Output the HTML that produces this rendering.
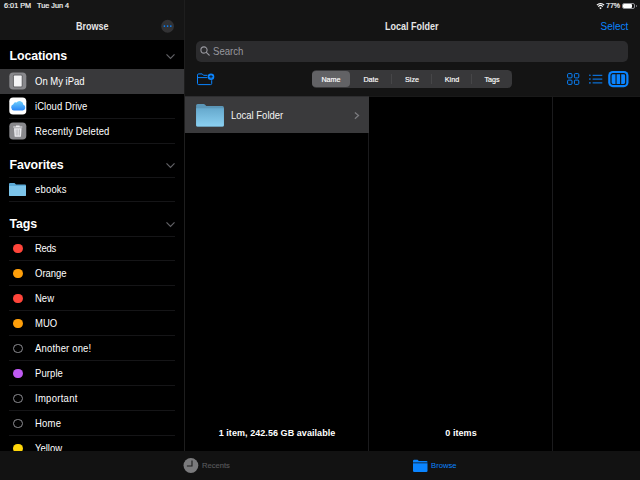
<!DOCTYPE html>
<html><head><meta charset="utf-8">
<style>
*{box-sizing:border-box;margin:0;padding:0}
html,body{width:640px;height:480px;overflow:hidden;background:#000;font-family:"Liberation Sans",sans-serif;color:#fff}
.abs{position:absolute}
#side{position:absolute;left:0;top:0;width:184px;height:480px;background:#000;overflow:hidden}
#sidehead{position:absolute;left:0;top:0;width:184px;height:39.5px;background:#151515}
#main{position:absolute;left:185px;top:0;width:455px;height:480px;background:#000}
#mainhead{position:absolute;left:0;top:0;width:455px;height:97px;background:#141414;border-bottom:1px solid #191919;height:97px}
#vdiv{position:absolute;left:184px;top:0;width:1px;height:451px;background:#1e1e1e}
.status{position:absolute;top:1px;font-size:7.3px;color:#f4f4f4;white-space:nowrap;-webkit-text-stroke:0.2px #f4f4f4;transform:translateY(0.4px) rotate(0.01deg);transform-origin:0 50%}
.t{position:absolute;white-space:nowrap}
.sec{position:absolute;left:9.5px;font-size:12.4px;font-weight:bold;letter-spacing:-0.12px}
.row{position:absolute;left:0;width:184px;height:25px}
.row .lbl{position:absolute;left:35px;top:6px;font-size:10.1px;white-space:nowrap;transform:translateY(0.8px) scaleX(0.94) rotate(0.01deg);transform-origin:0 50%}
.row .sep{position:absolute;left:9px;right:9px;bottom:0;height:1px;background:#151517}
.dot{position:absolute;left:13px;top:7.5px;width:9.5px;height:9.5px;border-radius:50%}
.ring{position:absolute;left:13px;top:7.5px;width:9.5px;height:9.5px;border-radius:50%;border:1px solid #8e8e93}
.chev{position:absolute;left:166px}
#tab{position:absolute;left:0;top:451px;width:640px;height:29px;background:#121212}
.seg{position:absolute;top:1px;height:18px;font-size:7.2px;text-align:center;line-height:18px;color:#fff;-webkit-text-stroke:0.15px #fff}
</style></head><body>
<div id="side">
  <div id="sidehead"></div>
  <div class="status" style="left:4px">6:01 PM</div>
  <div class="status" style="left:37px">Tue Jun 4</div>
  <div class="t" style="left:76px;top:20px;font-size:10px;font-weight:bold;color:#e6e6e6;transform:translateY(1px) scaleX(0.9) rotate(0.01deg);transform-origin:0 50%">Browse</div>
  <svg class="abs" style="left:160px;top:19px" width="15" height="15" viewBox="0 0 15 15"><circle cx="7.6" cy="7.25" r="6.4" fill="#323234"/><g fill="#0a84ff"><circle cx="4.4" cy="7.1" r="0.85"/><circle cx="7.6" cy="7.1" r="0.85"/><circle cx="10.8" cy="7.1" r="0.85"/></g></svg>

  <div class="sec" style="top:49px">Locations</div>
  <svg class="chev" style="top:53px" width="9" height="7" viewBox="0 0 9 7"><path d="M0.5 1.3 L4.5 5.4 L8.5 1.3" fill="none" stroke="#626266" stroke-width="1.15"/></svg>

  <div class="row" style="top:69px;background:#39393b">
    <svg class="abs" style="left:9px;top:3px" width="18" height="18" viewBox="0 0 18 18"><rect x="0.3" y="0.5" width="17" height="17" rx="3.8" fill="#88888c"/><rect x="3.9" y="2.6" width="9.8" height="12.8" rx="1.6" fill="#636366"/><rect x="4.9" y="3.6" width="7.8" height="10.8" rx="0.6" fill="#f4f4f6"/></svg>
    <div class="lbl">On My iPad</div>
  </div>
  <div class="row" style="top:94px">
    <svg class="abs" style="left:9px;top:3px" width="18" height="18" viewBox="0 0 18 18"><defs><linearGradient id="cg" x1="0" y1="0" x2="0" y2="1"><stop offset="0" stop-color="#6fd0fc"/><stop offset="1" stop-color="#2a86f6"/></linearGradient></defs><rect x="0.3" y="0.5" width="17" height="17" rx="3.8" fill="#fff"/><path transform="translate(0 13.4) scale(1 1.09) translate(0 -13.4)" d="M4.9 13.4 A2.9 2.9 0 0 1 4.3 7.7 A2.6 2.6 0 0 1 7.5 6.2 A3.9 3.9 0 0 1 14.4 8.3 A2.6 2.6 0 0 1 13.7 13.4 Z" fill="url(#cg)"/></svg>
    <div class="lbl" style="letter-spacing:0.07px">iCloud Drive</div>
    <div class="sep"></div>
  </div>
  <div class="row" style="top:119px">
    <svg class="abs" style="left:9px;top:3px" width="18" height="18" viewBox="0 0 18 18"><rect x="0.3" y="0.5" width="17" height="17" rx="3.8" fill="#88888c"/><path d="M4.3 5.4 H13.3 V4.4 H10.6 V3.5 H7 V4.4 H4.3 Z" fill="#ececf0"/><path d="M5 6.2 H12.6 L12 14.2 Q11.95 14.8 11.3 14.8 H6.3 Q5.65 14.8 5.6 14.2 Z" fill="#ececf0"/><path d="M7.1 7.4 L7.3 13.6 M8.8 7.4 V13.6 M10.5 7.4 L10.3 13.6" stroke="#a4a4a8" stroke-width="0.7"/></svg>
    <div class="lbl" style="letter-spacing:0.15px">Recently Deleted</div>
    <div class="sep"></div>
  </div>

  <div class="sec" style="top:158px">Favorites</div>
  <svg class="chev" style="top:162px" width="9" height="7" viewBox="0 0 9 7"><path d="M0.5 1.3 L4.5 5.4 L8.5 1.3" fill="none" stroke="#626266" stroke-width="1.15"/></svg>
  <div class="abs" style="left:9px;right:9px;top:177px;height:1px;background:#151517"></div>
  <div class="row" style="top:177px">
    <svg class="abs" style="left:9px;top:6px" width="17" height="13" viewBox="0 0 17 13"><path d="M0 1 Q0 0 1 0 H5.5 L7 1.4 H16 Q17 1.4 17 2.4 V12 Q17 13 16 13 H1 Q0 13 0 12 Z" fill="#5aa9d6"/><path d="M0 3 H17 V12 Q17 13 16 13 H1 Q0 13 0 12 Z" fill="#7cc4ea"/></svg>
    <div class="lbl" style="letter-spacing:0.2px">ebooks</div>
    <div class="sep"></div>
  </div>

  <div class="sec" style="top:217px">Tags</div>
  <svg class="chev" style="top:221px" width="9" height="7" viewBox="0 0 9 7"><path d="M0.5 1.3 L4.5 5.4 L8.5 1.3" fill="none" stroke="#626266" stroke-width="1.15"/></svg>
  <div class="abs" style="left:9px;right:9px;top:236px;height:1px;background:#151517"></div>

  <div class="row" style="top:236px"><div class="dot" style="background:#ff453a"></div><div class="lbl" style="letter-spacing:-0.3px">Reds</div><div class="sep"></div></div>
  <div class="row" style="top:261px"><div class="dot" style="background:#ff9f0a"></div><div class="lbl">Orange</div><div class="sep"></div></div>
  <div class="row" style="top:286px"><div class="dot" style="background:#ff453a"></div><div class="lbl">New</div><div class="sep"></div></div>
  <div class="row" style="top:311px"><div class="dot" style="background:#ff9f0a"></div><div class="lbl">MUO</div><div class="sep"></div></div>
  <div class="row" style="top:336px"><div class="ring"></div><div class="lbl" style="letter-spacing:0.18px">Another one!</div><div class="sep"></div></div>
  <div class="row" style="top:361px"><div class="dot" style="background:#bf5af2"></div><div class="lbl" style="letter-spacing:0.1px">Purple</div><div class="sep"></div></div>
  <div class="row" style="top:386px"><div class="ring"></div><div class="lbl" style="letter-spacing:0.3px">Important</div><div class="sep"></div></div>
  <div class="row" style="top:411px"><div class="ring"></div><div class="lbl" style="letter-spacing:0.25px">Home</div><div class="sep"></div></div>
  <div class="row" style="top:436px"><div class="dot" style="background:#ffd60a"></div><div class="lbl">Yellow</div></div>
</div>
<div id="vdiv"></div>

<div id="main">
  <div id="mainhead"></div>
  <div class="t" style="left:199.5px;top:20px;font-size:10px;font-weight:bold;color:#e6e6e6;transform:translateY(1px) scaleX(0.9) rotate(0.01deg);transform-origin:0 50%">Local Folder</div>
  <div class="t" style="left:415.5px;top:21px;font-size:10px;color:#0a84ff">Select</div>
  <!-- status right -->
  <svg class="abs" style="left:410.5px;top:2px" width="9" height="8" viewBox="0 0 9 8"><g fill="none" stroke="#fff" stroke-linecap="butt"><path d="M0.9 3.1 A5.1 5.1 0 0 1 8.1 3.1" stroke-width="1.15"/><path d="M2.25 4.55 A3.2 3.2 0 0 1 6.75 4.55" stroke-width="1.1"/></g><path d="M4.5 7.2 L3.3 5.9 A1.7 1.7 0 0 1 5.7 5.9 Z" fill="#fff"/></svg>
  <div class="status" style="left:421px;font-size:7px;top:2px">77%</div>
  <div class="abs" style="left:436.8px;top:3px;width:13.6px;height:6.2px;border:0.8px solid #8e8e93;border-radius:2px"></div>
  <div class="abs" style="left:438px;top:4.2px;width:9.2px;height:3.8px;border-radius:1px;background:#fff"></div>
  <div class="abs" style="left:450.8px;top:5px;width:1px;height:2.2px;background:#8e8e93;border-radius:0 1px 1px 0"></div>

  <!-- search -->
  <div class="abs" style="left:11px;top:41px;width:432px;height:20.5px;border-radius:5px;background:#2c2c2e"></div>
  <svg class="abs" style="left:15px;top:46px" width="10" height="10" viewBox="0 0 10 10"><circle cx="4" cy="4" r="3.1" fill="none" stroke="#98989f" stroke-width="1.1"/><path d="M6.3 6.3 L9.2 9.2" stroke="#98989f" stroke-width="1.2" stroke-linecap="round"/></svg>
  <div class="t" style="left:28px;top:46px;font-size:10.1px;color:#98989f;transform:translateY(0px) scaleX(0.95) rotate(0.01deg);transform-origin:0 50%">Search</div>

  <!-- new folder icon -->
  <svg class="abs" style="left:12px;top:72px" width="18" height="14" viewBox="0 0 18 14"><path d="M10.4 3.3 H6.5 L5.2 1.9 H1.7 Q0.5 1.9 0.5 3.1 V11.5 Q0.5 12.6 1.6 12.6 H13.6 Q14.7 12.6 14.7 11.5 V8.2 M0.5 5.6 H10.4" fill="none" stroke="#0a84ff" stroke-width="1"/><circle cx="14" cy="4.7" r="3.3" fill="#0a84ff"/><path d="M14 3 V6.4 M12.3 4.7 H15.7" stroke="#141414" stroke-width="0.9"/></svg>

  <!-- segmented -->
  <div class="abs" style="left:127px;top:70px;width:200px;height:18px;border-radius:4.5px;background:#38383a">
    <div class="abs" style="left:0.2px;top:0.8px;width:37.8px;height:16.4px;border-radius:4px;background:#626265"></div>
    <div class="seg" style="left:0;width:38px">Name</div>
    <div class="seg" style="left:38px;width:42px">Date</div>
    <div class="seg" style="left:80px;width:40px">Size</div>
    <div class="seg" style="left:120px;width:40px">Kind</div>
    <div class="seg" style="left:160px;width:40px">Tags</div>
    <div class="abs" style="left:79px;top:4px;width:1px;height:10px;background:#464648"></div>
    <div class="abs" style="left:119px;top:4px;width:1px;height:10px;background:#464648"></div>
    <div class="abs" style="left:159px;top:4px;width:1px;height:10px;background:#464648"></div>
  </div>

  <!-- view icons -->
  <svg class="abs" style="left:381.8px;top:73px" width="13" height="13" viewBox="0 0 13 13"><g fill="none" stroke="#0a84ff" stroke-width="1"><rect x="0.6" y="0.6" width="4.4" height="4.3" rx="1"/><rect x="7.4" y="0.6" width="4.4" height="4.3" rx="1"/><rect x="0.6" y="7.1" width="4.4" height="4.3" rx="1"/><rect x="7.4" y="7.1" width="4.4" height="4.3" rx="1"/></g></svg>
  <svg class="abs" style="left:404px;top:74px" width="14" height="11" viewBox="0 0 14 11"><g stroke="#0a84ff" stroke-width="1"><path d="M3.6 1.3 H13.3 M3.6 5.1 H13.3 M3.6 8.9 H13.3"/></g><g fill="#0a84ff"><circle cx="0.9" cy="1.3" r="0.8"/><circle cx="0.9" cy="5.1" r="0.8"/><circle cx="0.9" cy="8.9" r="0.8"/></g></svg>
  <svg class="abs" style="left:423px;top:70px" width="21" height="18" viewBox="0 0 21 18"><rect x="0.2" y="1" width="20.3" height="16.2" rx="4.6" fill="#0a84ff"/><rect x="3" y="3.7" width="14.7" height="10.8" rx="2" fill="none" stroke="#141414" stroke-width="1.2"/><path d="M8.05 3.7 V14.5 M12.65 3.7 V14.5" stroke="#141414" stroke-width="1.1"/></svg>

  <!-- column 1 row -->
  <div class="abs" style="left:0;top:96px;width:184px;height:1px;background:#2d2d2f;z-index:2"></div><div class="abs" style="left:0;top:97px;width:184px;height:36px;background:#3a3a3c;z-index:2"></div>
  <svg class="abs" style="left:11px;top:104px;z-index:3" width="28" height="23" viewBox="0 0 28 23"><defs><linearGradient id="fg" x1="0" y1="0" x2="0" y2="1"><stop offset="0" stop-color="#66a9cd"/><stop offset="1" stop-color="#8bd0f1"/></linearGradient></defs><path d="M0.1 1.5 Q0.1 0 1.6 0 H7.6 Q8.5 0 9.1 0.7 L10.3 2 H26.4 Q27.9 2 27.9 3.5 V21 Q27.9 22.5 26.4 22.5 H1.6 Q0.1 22.5 0.1 21 Z" fill="#5b96b7"/><path d="M0.1 4.2 H27.9 V21 Q27.9 22.5 26.4 22.5 H1.6 Q0.1 22.5 0.1 21 Z" fill="url(#fg)"/></svg>
  <div class="t" style="left:46px;top:110px;font-size:10.1px;color:#f4f4f4;transform:translateY(0px) scaleX(0.94) rotate(0.01deg);transform-origin:0 50%;z-index:3">Local Folder</div>
  <svg class="abs" style="left:169px;top:110px;z-index:3" width="6" height="10" viewBox="0 0 6 10"><path d="M0.9 2.5 L4.5 5.6 L0.9 8.7" fill="none" stroke="#7a7a7e" stroke-width="1.3"/></svg>

  <div class="abs" style="left:183px;top:97px;width:1px;height:354px;background:#1b1b1d"></div>
  <div class="abs" style="left:367px;top:97px;width:1px;height:354px;background:#1b1b1d"></div>

  <div class="t" style="left:0;width:184px;text-align:center;top:428px;font-size:9px;font-weight:bold;letter-spacing:0.06px">1 item, 242.56 GB available</div>
  <div class="t" style="left:184px;width:184px;text-align:center;top:428px;font-size:9px;font-weight:bold;letter-spacing:0.06px">0 items</div>
</div>

<div id="tab">
  <svg class="abs" style="left:183px;top:6px" width="16" height="17" viewBox="0 0 16 17"><circle cx="7.9" cy="8.5" r="7.4" fill="#7a7a7c"/><path d="M9 3.4 V9 H3.9" fill="none" stroke="#1e1e1e" stroke-width="1.1"/></svg>
  <div class="t" style="left:202px;top:10px;font-size:7.6px;color:#58585b;-webkit-text-stroke:0.15px #58585b">Recents</div>
  <svg class="abs" style="left:413px;top:8px" width="15" height="14" viewBox="0 0 15 14"><path d="M0 2 Q0 0.8 1.2 0.8 H4.6 L5.8 1.9 H13.3 Q14.5 1.9 14.5 3.1 V3.4 H0 Z" fill="#0a84ff"/><path d="M0 4.2 H14.5 V12 Q14.5 13.1 13.3 13.1 H1.2 Q0 13.1 0 12 Z" fill="#0a84ff"/></svg>
  <div class="t" style="left:431px;top:10px;font-size:7.7px;color:#0a84ff">Browse</div>
</div>
</body></html>
